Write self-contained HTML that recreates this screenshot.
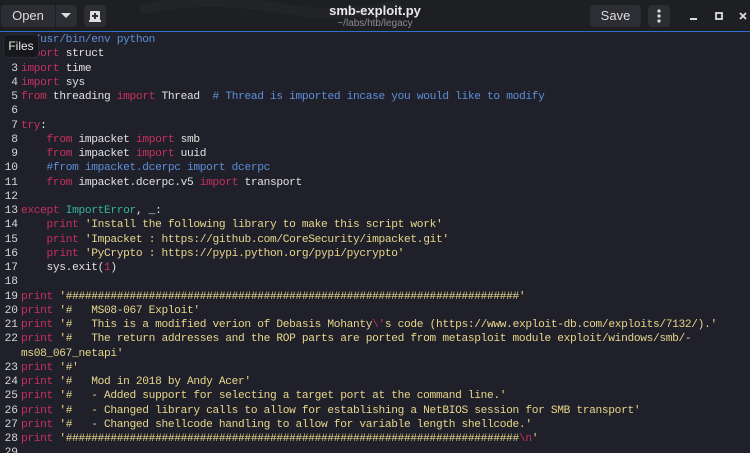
<!DOCTYPE html>
<html><head><meta charset="utf-8"><style>
*{margin:0;padding:0;box-sizing:border-box}
html,body{width:750px;height:453px;overflow:hidden}
body{background:#1f2029;font-family:"Liberation Sans",sans-serif;position:relative}
.hdr{position:absolute;left:0;top:0;width:750px;height:32px;background:#1e1f23;border-bottom:1px solid #2f6fd0;overflow:hidden}
.btn{position:absolute;top:5px;height:22px;background:#2d2e33;border-radius:4px;color:#dcdcdc;font-size:13px;line-height:22px;text-align:center}
.title{position:absolute;left:0;width:750px;text-align:center;color:#e8e8e8}
.code{position:absolute;left:0;top:33px;font-family:"Liberation Mono",monospace;font-size:11.2px;letter-spacing:-0.33px;line-height:14.25px;color:#e2e2e2;white-space:pre}
.r{display:block;height:14.25px}
.n{display:inline-block;width:18px;text-align:right;margin-right:3px;color:#d8d8d8;letter-spacing:0}
.k{color:#c8305e}.c{color:#5e8fd8}.s{color:#e8d68c}.t{color:#36b3a0}
.tip{position:absolute;left:3px;top:34px;width:36px;height:24px;background:#17181b;border:1px solid #2a2b30;border-radius:5px;color:#e8e8e8;font-size:12px;line-height:22px;text-align:center}
</style></head><body>
<div class="hdr">
<svg style="position:absolute;left:140px;top:0" width="300" height="32"><path d="M0 10 Q60 -5 140 8 Q200 20 260 4" stroke="#232428" stroke-width="10" fill="none"/></svg>
<div class="btn" style="left:1px;width:54px;border-radius:4px 0 0 4px">Open</div>
<div class="btn" style="left:55px;width:22px;border-radius:0 4px 4px 0;border-left:1px solid #1e1f23"><svg width="10" height="6" style="margin-top:8px;display:block;margin-left:5px"><path d="M0 0H10L5 5Z" fill="#ddd"/></svg></div>
<div class="btn" style="left:84px;width:22px"><svg width="12" height="11" style="display:block;margin:6px 0 0 5px"><rect x="1" y="0" width="10" height="10" rx="1" fill="#ddd"/><rect x="0" y="9" width="12" height="2" fill="#ddd"/><path d="M6 2V8M3 5H9" stroke="#2d2e33" stroke-width="2"/></svg></div>
<div class="title" style="top:3px;font-size:13px;font-weight:bold">smb-exploit.py</div>
<div class="title" style="top:18px;font-size:10px;color:#8c8c90">~/labs/htb/legacy</div>
<div class="btn" style="left:590px;width:51px">Save</div>
<div class="btn" style="left:648px;width:22px"><svg width="4" height="14" style="display:block;margin:4px 0 0 9px"><circle cx="2" cy="2" r="1.6" fill="#ddd"/><circle cx="2" cy="7" r="1.6" fill="#ddd"/><circle cx="2" cy="12" r="1.6" fill="#ddd"/></svg></div>
<svg style="position:absolute;left:688px;top:10px" width="62" height="12"><rect x="2" y="8" width="7" height="2" fill="#ddd"/><rect x="28" y="3" width="6" height="6" fill="none" stroke="#ddd" stroke-width="1.8"/><path d="M52 3L58 9M58 3L52 9" stroke="#ddd" stroke-width="1.8"/></svg>
</div>
<div class="code"><span class="r"><span class="n">1</span><span class="c">#!/usr/bin/env python</span></span><span class="r"><span class="n">2</span><span class="k">import</span> struct</span><span class="r"><span class="n">3</span><span class="k">import</span> time</span><span class="r"><span class="n">4</span><span class="k">import</span> sys</span><span class="r"><span class="n">5</span><span class="k">from</span> threading <span class="k">import</span> Thread  <span class="c"># Thread is imported incase you would like to modify</span></span><span class="r"><span class="n">6</span></span><span class="r"><span class="n">7</span><span class="k">try</span>:</span><span class="r"><span class="n">8</span>    <span class="k">from</span> impacket <span class="k">import</span> smb</span><span class="r"><span class="n">9</span>    <span class="k">from</span> impacket <span class="k">import</span> uuid</span><span class="r"><span class="n">10</span>    <span class="c">#from impacket.dcerpc import dcerpc</span></span><span class="r"><span class="n">11</span>    <span class="k">from</span> impacket.dcerpc.v5 <span class="k">import</span> transport</span><span class="r"><span class="n">12</span></span><span class="r"><span class="n">13</span><span class="k">except</span> <span class="t">ImportError</span>, _:</span><span class="r"><span class="n">14</span>    <span class="k">print</span> <span class="s">'Install the following library to make this script work'</span></span><span class="r"><span class="n">15</span>    <span class="k">print</span> <span class="s">'Impacket : https://github.com/CoreSecurity/impacket.git'</span></span><span class="r"><span class="n">16</span>    <span class="k">print</span> <span class="s">'PyCrypto : https://pypi.python.org/pypi/pycrypto'</span></span><span class="r"><span class="n">17</span>    sys.exit(<span class="k">1</span>)</span><span class="r"><span class="n">18</span></span><span class="r"><span class="n">19</span><span class="k">print</span> <span class="s">'#######################################################################'</span></span><span class="r"><span class="n">20</span><span class="k">print</span> <span class="s">'#   MS08-067 Exploit'</span></span><span class="r"><span class="n">21</span><span class="k">print</span> <span class="s">'#   This is a modified verion of Debasis Mohanty<span class="k">\'</span>s code (https://www.exploit-db.com/exploits/7132/).'</span></span><span class="r"><span class="n">22</span><span class="k">print</span> <span class="s">'#   The return addresses and the ROP parts are ported from metasploit module exploit/windows/smb/-</span></span><span class="r"><span class="n"></span><span class="s">ms08_067_netapi'</span></span><span class="r"><span class="n">23</span><span class="k">print</span> <span class="s">'#'</span></span><span class="r"><span class="n">24</span><span class="k">print</span> <span class="s">'#   Mod in 2018 by Andy Acer'</span></span><span class="r"><span class="n">25</span><span class="k">print</span> <span class="s">'#   - Added support for selecting a target port at the command line.'</span></span><span class="r"><span class="n">26</span><span class="k">print</span> <span class="s">'#   - Changed library calls to allow for establishing a NetBIOS session for SMB transport'</span></span><span class="r"><span class="n">27</span><span class="k">print</span> <span class="s">'#   - Changed shellcode handling to allow for variable length shellcode.'</span></span><span class="r"><span class="n">28</span><span class="k">print</span> <span class="s">'#######################################################################<span class="k">\n</span>'</span></span><span class="r"><span class="n">29</span></span></div>
<div class="tip">Files</div>
</body></html>
